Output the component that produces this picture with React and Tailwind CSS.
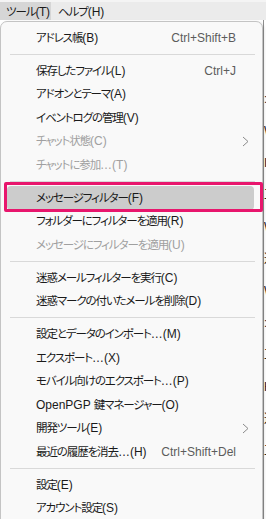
import React from 'react';

const items = [
  { t: 'アドレス帳(B)', k: 'Ctrl+Shift+B' },
  'sep',
  { t: '保存したファイル(L)', k: 'Ctrl+J' },
  { t: 'アドオンとテーマ(A)' },
  { t: 'イベントログの管理(V)' },
  { t: 'チャット状態(C)', d: true, sub: true },
  { t: 'チャットに参加…(T)', d: true },
  'sep',
  { t: 'メッセージフィルター(F)', active: true },
  { t: 'フォルダーにフィルターを適用(R)' },
  { t: 'メッセージにフィルターを適用(U)', d: true },
  'sep',
  { t: '迷惑メールフィルターを実行(C)' },
  { t: '迷惑マークの付いたメールを削除(D)' },
  'sep',
  { t: '設定とデータのインポート…(M)' },
  { t: 'エクスポート…(X)' },
  { t: 'モバイル向けのエクスポート…(P)' },
  { t: 'OpenPGP 鍵マネージャー(O)' },
  { t: '開発ツール(E)', sub: true },
  { t: '最近の履歴を消去…(H)', k: 'Ctrl+Shift+Del' },
  'sep',
  { t: '設定(E)' },
  { t: 'アカウント設定(S)' },
];

// Japanese runs get a narrower setting so kana look like the UI font
function Label({ text }) {
  const parts = text.split(/([\u3000-\u9fff\uff00-\uffef]+)/);
  return (
    <span className="whitespace-nowrap">
      {parts.map((p, i) =>
        i % 2 ? (
          <span key={i} className="text-[11.5px] tracking-[-1.1px]">
            {p}
          </span>
        ) : (
          <span key={i}>{p}</span>
        )
      )}
    </span>
  );
}

function Chevron() {
  return (
    <svg width="7" height="11" viewBox="0 0 7 11" className="absolute right-[13px]">
      <polyline points="1,1 6,5.5 1,10" fill="none" stroke="#8a8a8a" strokeWidth="1" />
    </svg>
  );
}

function MenuRow({ item }) {
  if (item.active) {
    return (
      <div className="px-[6px]">
        <div className="flex items-center h-[23.5px] pl-[29px] mr-[2px] rounded-[4px] bg-[#cccccc] text-[#1a1a1a]">
          <Label text={item.t} />
        </div>
      </div>
    );
  }
  return (
    <div
      className={`relative flex items-center h-[23.5px] pl-[35px] pr-[26px] ${
        item.d ? 'text-[#a0a0a0]' : 'text-[#1a1a1a]'
      }`}
    >
      <Label text={item.t} />
      {item.k && <span className="ml-auto text-[#5c5c5c] whitespace-nowrap">{item.k}</span>}
      {item.sub && <Chevron />}
    </div>
  );
}

export default function App() {
  return (
    <div className="relative w-[266px] h-[519px] overflow-hidden bg-white text-[12px] font-['Liberation_Sans','Noto_Sans_CJK_JP',sans-serif] [font-feature-settings:'palt']">
      {/* menubar */}
      <div className="flex h-[20px] bg-[#ebebeb] border-t-2 border-[#f4f4f4] text-[#1a1a1a]">
        <div className="flex items-center pl-[6px] pt-[2px] w-[51px] bg-[#d6d6d6] tracking-[-0.3px]">
          <Label text="ツール(T)" />
        </div>
        <div className="flex items-center pl-[7px] pt-[2px]">
          <Label text="ヘルプ(H)" />
        </div>
      </div>

      {/* window content behind the menu */}
      <div className="flex h-full">
        <div className="w-[263px]" />
        <div className="w-[3px] border-l border-[#8f8f8f] flex flex-col gap-[14px] pt-[70px] text-[#222] overflow-hidden">
          <span>:</span>
          <span>W</span>
          <span>I</span>
          <span>工</span>
          <span>W</span>
          <span>迷</span>
          <span>W</span>
          <span>:</span>
          <span>工</span>
          <span>H</span>
          <span>迷</span>
          <span>工</span>
        </div>
      </div>

      {/* popup menu */}
      <div className="absolute top-[21px] left-0 w-[263px] h-[520px] bg-[#f9f9f9] border border-[#c4c4c4] rounded-t-[7px] shadow-[1px_1px_3px_rgba(0,0,0,0.15)] pt-[4px]">
        {items.map((it, i) =>
          it === 'sep' ? (
            <div key={i} className="h-[9.5px] flex items-center pl-[9px] pr-[7px]">
              <div className="h-px w-full bg-[#d9d9d9]" />
            </div>
          ) : (
            <MenuRow key={i} item={it} />
          )
        )}
      </div>

      {/* annotation box */}
      <div className="absolute left-[4px] top-[182px] w-[259px] h-[30px] border-[3px] border-[#e8166d] rounded-[2px]" />
    </div>
  );
}
